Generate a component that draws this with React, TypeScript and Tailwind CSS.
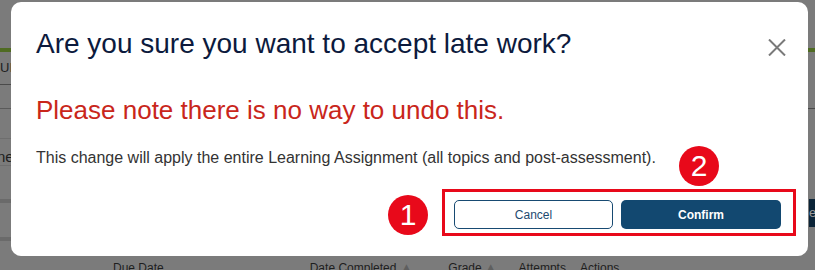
import React from 'react';

const Backdrop: React.FC = () => (
  <div className="absolute inset-0 bg-[#7b7b7b] text-[#1e1e1e]">
    {/* left edge of the page behind */}
    <div className="absolute left-0 top-[48px] h-[4px] w-[12px] bg-[#4f6b22]" />
    <div className="absolute left-0 top-[58px] text-[13px] tracking-wide">UD</div>
    <div className="absolute left-0 top-[84px] h-px w-[12px] bg-[#4a4a4a]" />
    <div className="absolute left-0 top-[108px] h-px w-[12px] bg-[#5a5a5a]" />
    <div className="absolute left-0 top-[138px] h-px w-[12px] bg-[#6e6e6e]" />
    <div className="absolute left-[-3px] top-[146px] text-[15px]">ne</div>
    <div className="absolute left-0 top-[165px] h-px w-[12px] bg-[#6e6e6e]" />
    <div className="absolute left-0 top-[199px] h-[4px] w-[12px] bg-[#6a6a6a]" />
    <div className="absolute left-0 top-[237px] h-[4px] w-[12px] bg-[#6a6a6a]" />
    {/* right edge */}
    <div className="absolute right-0 top-[48px] h-[4px] w-[8px] bg-[#4f6b22]" />
    <div className="absolute right-0 top-[108px] h-px w-[8px] bg-[#4a4a4a]" />
    <div className="absolute right-0 top-[199px] flex h-[28px] w-[6px] items-center overflow-hidden bg-[#0b2438] text-[13px] text-[#9a9a9a]">
      e
    </div>
    {/* table header peeking below */}
    <div className="absolute left-0 top-[259px] flex w-full text-[12px]">
      <span className="ml-[113px]">Due Date</span>
      <span className="ml-[146px] flex items-start">
        Date Completed<span className="ml-[5px] text-[10px] text-[#5f5f5f]">▲</span>
      </span>
      <span className="ml-[37px] flex items-start">
        Grade<span className="ml-[4px] text-[10px] text-[#5f5f5f]">▲</span>
      </span>
      <span className="ml-[23px]">Attempts</span>
      <span className="ml-[14px]">Actions</span>
    </div>
  </div>
);

const Marker: React.FC<{ n: number; className?: string }> = ({ n, className }) => (
  <div
    className={`flex h-[40px] w-[40px] shrink-0 items-center justify-center rounded-full bg-[#e8091a] text-[30px] leading-none text-white ${className ?? ''}`}
  >
    {n}
  </div>
);

export default function App() {
  return (
    <div className="relative h-[270px] w-[815px] overflow-hidden font-['Liberation_Sans',Arial,sans-serif]">
      <Backdrop />

      <div className="absolute left-[11px] top-[2px] flex h-[254px] w-[797px] flex-col rounded-[10px] bg-white pl-[25px] pr-[12px] pt-[26px]">
        <div className="flex items-start justify-between">
          <h2 className="text-[28px] leading-[32px] text-[#0c1a3d]">Are you sure you want to accept late work?</h2>
          <button className="mr-[10px] mt-[11px] text-[#7a7a7a]" aria-label="Close">
            <svg width="18" height="17" viewBox="0 0 18 17" fill="none" stroke="currentColor" strokeWidth="2">
              <path d="M1 0.5 L17 16.5 M17 0.5 L1 16.5" />
            </svg>
          </button>
        </div>

        <p className="mt-[35px] text-[26px] leading-[30px] text-[#c9261b]">Please note there is no way to undo this.</p>

        <p className="mt-[24px] text-[16px] leading-[18px] text-[#333333]">
          This change will apply the entire Learning Assignment (all topics and post-assessment).
        </p>

        <div className="relative mt-[22px] flex items-center justify-end">
          <Marker n={1} className="mr-[14px] mt-[5px]" />
          <div className="flex gap-[8px] border-[3px] border-[#e8091a] pb-[4px] pl-[9px] pr-[12px] pt-[8px]">
            <button className="h-[29px] w-[159px] rounded-[5px] border border-[#174a72] text-[12px] text-[#1d4a6f]">
              Cancel
            </button>
            <button className="h-[29px] w-[160px] rounded-[5px] bg-[#124870] text-[12px] font-bold text-white">
              Confirm
            </button>
          </div>
          <Marker n={2} className="absolute right-[77px] top-[-43px]" />
        </div>
      </div>
    </div>
  );
}
